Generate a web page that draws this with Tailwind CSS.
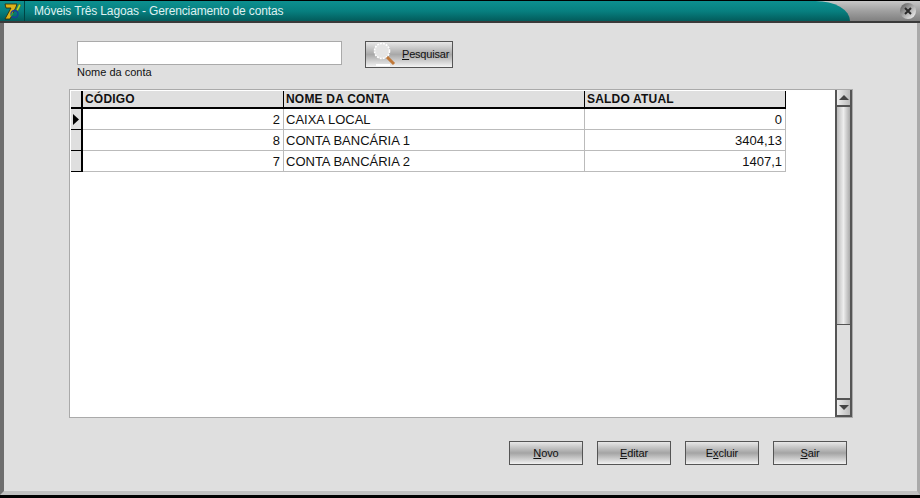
<!DOCTYPE html>
<html lang="en">
<head>
  <meta charset="UTF-8" />
  <title>Gerenciamento de contas</title>
  <script src="https://cdn.jsdelivr.net/npm/@tailwindcss/browser@4"></script>
</head>
<body class="w-[920px] h-[498px] overflow-hidden bg-black font-['Liberation_Sans',sans-serif] text-[13px] text-[#111]">
  <div class="h-[495px] flex flex-col">
    <!-- Title bar -->
    <header class="h-[23px] flex bg-gradient-to-b from-[#c8c8c8] via-[#a0a0a0] to-[#808080] border-t border-black border-b-2 border-b-[#3a3a3a]">
      <div class="w-[850px] flex rounded-tr-[36px_21px] bg-gradient-to-b from-[#0c9090] via-[#078080] to-[#035c5c]">
        <div class="w-[25px] flex items-center justify-center border-r border-[#044]">
          <svg width="24" height="20" viewBox="0 0 24 20">
            <path d="M5 3h12l-1 3-6 12H5l6-11H6z" fill="#dcb41c" stroke="#2e2400" stroke-width=".8" />
            <path d="M16 9l3-6 2 1-3 6z" fill="#b4d430" stroke="#2e5a10" stroke-width=".4" />
            <circle cx="14.500" cy="13" r="3.500" fill="none" stroke="#1c3c9c" stroke-width="1.300" />
            <path d="M11 15l2-3" stroke="#30a040" stroke-width="1.500" />
          </svg>
        </div>
        <div class="pl-[9px] text-[12px] leading-[21px] tracking-[-0.14px] text-[#dff0f0]">Móveis Três Lagoas - Gerenciamento de contas</div>
      </div>
      <div class="flex-1 flex justify-end pr-[4px] items-center">
        <div class="w-[16px] h-[16px] rounded-full bg-gradient-to-br from-[#555] via-[#aaa] to-[#fff] flex items-center justify-center">
          <svg width="8" height="8" viewBox="0 0 8 8"><path d="M1 1l6 6M7 1l-6 6" stroke="#2a2a2a" stroke-width="2" /></svg>
        </div>
      </div>
    </header>
    <!-- Client area -->
    <main class="flex-1 flex flex-col bg-[#dfdfdf] border-l-4 border-l-[#6e6e6e] border-r-3 border-r-[#aaa] border-b-4 border-b-[#c0c0c0] pt-[18px]">
      <div class="flex pl-[73px] h-[48px]">
        <div class="w-[265px]">
          <input type="text" class="block w-full h-[24px] bg-white border border-[#aaa]" />
          <div class="text-[11px] leading-[14px]">Nome da conta</div>
        </div>
        <button class="ml-[23px] w-[88px] h-[27px] flex items-center border border-[#555] bg-gradient-to-b from-[#e8e8e8] via-[#a8a8a8] to-[#f4f4f4] text-[11px]">
          <svg class="ml-[6px]" width="26" height="25" viewBox="0 0 26 25">
            <circle cx="10" cy="9" r="7.500" fill="#e4e4e4" stroke="#fff" stroke-width="1.600" stroke-dasharray="2 1" />
            <path d="M15 15l7 7" stroke="#c07838" stroke-width="3" />
            <path d="M4 23h14" stroke="#fff" stroke-width="2" />
          </svg>
          <span class="ml-[4px] tracking-[-0.2px]"><u>P</u>esquisar</span>
        </button>
      </div>
      <!-- Grid -->
      <section class="ml-[65px] w-[784px] h-[329px] flex bg-white border border-[#aaa]">
        <div class="w-[765px] pt-[1px]">
          <div class="flex h-[18px] border-b-2 border-black font-bold text-[12px] leading-[17px] tracking-[0.2px] bg-[#dfdfdf] w-[715px] ml-[1px] border-r border-r-black">
            <div class="w-[12px] border-r-2 border-black"></div>
            <div class="w-[201px] pl-[2px] border-r border-black">CÓDIGO</div>
            <div class="w-[301px] pl-[2px] border-r border-black">NOME DA CONTA</div>
            <div class="flex-1 pl-[2px]">SALDO ATUAL</div>
          </div>
          <div class="flex h-[21px] w-[715px] ml-[1px] border-b border-[#bbb] leading-[21px] border-r border-r-[#bbb]">
            <div class="w-[12px] -mb-px bg-[#dfdfdf] border-r-2 border-black border-b border-b-black flex items-center justify-center"><svg width="6" height="11" viewBox="0 0 6 11"><path d="M0 0l6 5.500-6 5.500z" /></svg></div>
            <div class="w-[201px] pr-[3px] text-right border-r border-[#bbb]">2</div>
            <div class="w-[301px] pl-[2px] border-r border-[#bbb]">CAIXA LOCAL</div>
            <div class="flex-1 pr-[3px] text-right">0</div>
          </div>
          <div class="flex h-[21px] w-[715px] ml-[1px] border-b border-[#bbb] leading-[21px] border-r border-r-[#bbb]">
            <div class="w-[12px] -mb-px bg-[#dfdfdf] border-r-2 border-black border-b border-b-black"></div>
            <div class="w-[201px] pr-[3px] text-right border-r border-[#bbb]">8</div>
            <div class="w-[301px] pl-[2px] border-r border-[#bbb]">CONTA BANCÁRIA 1</div>
            <div class="flex-1 pr-[3px] text-right">3404,13</div>
          </div>
          <div class="flex h-[21px] w-[715px] ml-[1px] border-b border-[#bbb] leading-[21px] border-r border-r-[#bbb]">
            <div class="w-[12px] -mb-px bg-[#dfdfdf] border-r-2 border-black border-b border-b-black"></div>
            <div class="w-[201px] pr-[3px] text-right border-r border-[#bbb]">7</div>
            <div class="w-[301px] pl-[2px] border-r border-[#bbb]">CONTA BANCÁRIA 2</div>
            <div class="flex-1 pr-[3px] text-right">1407,1</div>
          </div>
        </div>
        <!-- Scrollbar -->
        <div class="w-[17px] flex flex-col border-x-2 border-b-2 border-[#555] bg-[#dfdfdf]">
          <div class="h-[17px] flex items-center justify-center border-b-2 border-[#555] bg-gradient-to-r from-[#eee] to-[#bbb]">
            <div class="w-0 h-0 border-x-[5px] border-x-transparent border-b-[5px] border-b-[#444]"></div>
          </div>
          <div class="h-[218px] border-b border-[#555] bg-gradient-to-r from-[#bbb] via-[#eee] to-[#aaa]"></div>
          <div class="flex-1"></div>
          <div class="h-[17px] flex items-center justify-center border-t-2 border-[#555] bg-gradient-to-r from-[#eee] to-[#bbb]">
            <div class="w-0 h-0 border-x-[5px] border-x-transparent border-t-[5px] border-t-[#444]"></div>
          </div>
        </div>
      </section>
      <!-- Footer buttons -->
      <div class="flex justify-end gap-[14px] mt-[23px] pr-[70px] text-[11px] tracking-[-0.1px]">
        <button class="w-[74px] h-[24px] border border-[#555] bg-gradient-to-b from-[#e8e8e8] via-[#a4a4a4] to-[#f2f2f2]"><u>N</u>ovo</button>
        <button class="w-[74px] h-[24px] border border-[#555] bg-gradient-to-b from-[#e8e8e8] via-[#a4a4a4] to-[#f2f2f2]"><u>E</u>ditar</button>
        <button class="w-[74px] h-[24px] border border-[#555] bg-gradient-to-b from-[#e8e8e8] via-[#a4a4a4] to-[#f2f2f2]">E<u>x</u>cluir</button>
        <button class="w-[74px] h-[24px] border border-[#555] bg-gradient-to-b from-[#e8e8e8] via-[#a4a4a4] to-[#f2f2f2]"><u>S</u>air</button>
      </div>
    </main>
  </div>
</body>
</html>
